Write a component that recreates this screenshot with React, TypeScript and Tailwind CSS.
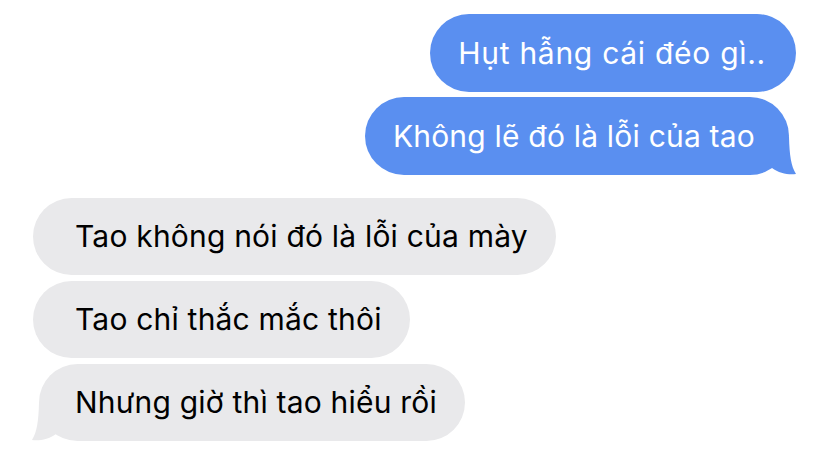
const blue = [
  { text: "Hụt hẫng cái đéo gì..", tail: false, wide: true },
  { text: "Không lẽ đó là lỗi của tao", tail: true, wide: false },
];

const grey = [
  { text: "Tao không nói đó là lỗi của mày", tail: false },
  { text: "Tao chỉ thắc mắc thôi", tail: false },
  { text: "Nhưng giờ thì tao hiểu rồi", tail: true },
];

function Tail({ color, side }: { color: string; side: "left" | "right" }) {
  return (
    <svg
      width="30"
      height="40"
      viewBox="0 0 30 40"
      className={`pointer-events-none absolute bottom-0 ${side === "right" ? "-right-[7px]" : "-left-[7px] -scale-x-100"}`}
    >
      <path
        d="M0 2 L23 2 C23.5 20 25 31 30 39 C23 40 13 38.5 6 33 L0 30 Z"
        fill={color}
      />
    </svg>
  );
}

export default function App() {
  return (
    <div
      className="flex h-[459px] w-[828px] flex-col bg-white pt-[14px]"
      style={{ fontFamily: "Inter, 'Noto Sans', sans-serif" }}
    >
      {/* Sent */}
      <div className="flex flex-col items-end gap-[5px] pr-[32px]">
        {blue.map((m) => (
          <div
            key={m.text}
            className={`relative flex h-[78px] items-center rounded-full bg-[#5a8ff0] pl-[28px] text-[30px] text-white ${m.wide ? "tracking-[0.72px]" : "tracking-[0.2px]"} ${m.tail ? "mr-[7px] pr-[34px]" : "pr-[30px]"}`}
          >
            {m.text}
            {m.tail && <Tail color="#5a8ff0" side="right" />}
          </div>
        ))}
      </div>

      {/* Received */}
      <div className="mt-[23px] flex flex-col items-start gap-[6px] pl-[33px]">
        {grey.map((m) => (
          <div
            key={m.text}
            className={`relative flex h-[77px] items-center rounded-full bg-[#e9e9eb] pr-[28px] text-[30px] tracking-[0.2px] text-black ${m.tail ? "ml-[6px] pl-[36px]" : "pl-[42px]"}`}
          >
            {m.text}
            {m.tail && <Tail color="#e9e9eb" side="left" />}
          </div>
        ))}
      </div>
    </div>
  );
}
